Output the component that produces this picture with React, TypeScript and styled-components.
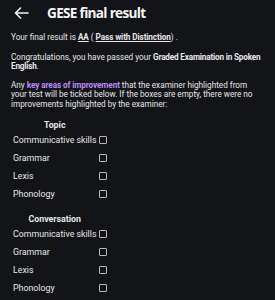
import React from 'react'
import styled, { createGlobalStyle } from 'styled-components'

const GlobalStyle = createGlobalStyle`
  html, body {
    margin: 0;
    padding: 0;
    background: #131417;
  }
  body {
    font-family: Roboto, 'Noto Sans', sans-serif;
    color: #e6e6e8;
  }
`

const Page = styled.div`
  width: 275px;
  min-height: 300px;
  background: #131417;
`

const Header = styled.header`
  display: flex;
  align-items: center;
  height: 25px;
  padding-left: 13px;
`

const BackButton = styled.button`
  display: flex;
  align-items: center;
  justify-content: center;
  width: 16px;
  height: 16px;
  padding: 0;
  border: none;
  background: none;
  color: #f2f2f2;
  margin-right: 18px;
`

const Title = styled.h1`
  margin: 0;
  font-family: 'Open Sans', 'Noto Sans', sans-serif;
  font-size: 13.6px;
  font-weight: 700;
  color: #f4f4f4;
  letter-spacing: -0.7px;
`

const Content = styled.main`
  padding: 8px 10px 0 11px;
`

const Para = styled.p`
  margin: 0 0 9.5px;
  font-size: 8.2px;
  line-height: 9.2px;

  &:first-child {
    margin-bottom: 11px;
  }
`

const Strong = styled.strong`
  font-weight: 700;
  letter-spacing: -0.18px;
`

const Linkish = styled.span`
  font-weight: 700;
  letter-spacing: -0.1px;
  text-decoration: underline;
  text-underline-offset: 1px;
`

const Highlight = styled.span`
  color: #b98cf2;
  font-weight: 700;
  letter-spacing: -0.1px;
`

const Section = styled.section<{ $first?: boolean }>`
  display: grid;
  grid-template-columns: auto auto;
  justify-content: start;
  column-gap: 3px;
  margin: ${(p) => (p.$first ? '10px' : '10px')} 0 0 2px;
`

const SectionTitle = styled.h2`
  grid-column: 1;
  margin: 0;
  text-align: center;
  font-size: 8.8px;
  font-weight: 700;
  line-height: 12px;
`

const Label = styled.div`
  grid-column: 1;
  font-size: 8.8px;
  line-height: 18px;
  height: 18px;
`

const Box = styled.div`
  grid-column: 2;
  align-self: center;
  width: 6px;
  height: 6px;
  border: 1.2px solid #b8b8bc;
  border-radius: 1px;
`

const skills = ['Communicative skills', 'Grammar', 'Lexis', 'Phonology']

const Checklist = ({ title, first }: { title: string; first?: boolean }) => (
  <Section $first={first}>
    <SectionTitle>{title}</SectionTitle>
    {skills.map((s) => (
      <React.Fragment key={s}>
        <Label>{s}</Label>
        <Box />
      </React.Fragment>
    ))}
  </Section>
)

export default function App() {
  return (
    <Page>
      <GlobalStyle />
      <Header>
        <BackButton aria-label="Back">
          <svg width="15" height="12" viewBox="0 0 15 12" fill="none" stroke="currentColor" strokeWidth="1.6" strokeLinecap="round" strokeLinejoin="round">
            <path d="M14 6H1.5M6.5 1L1.5 6l5 5" />
          </svg>
        </BackButton>
        <Title>GESE final result</Title>
      </Header>
      <Content>
        <Para>
          Your final result is <Linkish>AA</Linkish> ( <Linkish>Pass with Distinction</Linkish>) .
        </Para>
        <Para>
          Congratulations, you have passed your <Strong>Graded Examination in Spoken English</Strong>.
        </Para>
        <Para>
          Any <Highlight>key areas of improvement</Highlight> that the examiner highlighted from your
          test will be ticked below. If the boxes are empty, there were no improvements highlighted
          by the examiner:
        </Para>
        <Checklist title="Topic" first />
        <Checklist title="Conversation" />
      </Content>
    </Page>
  )
}
